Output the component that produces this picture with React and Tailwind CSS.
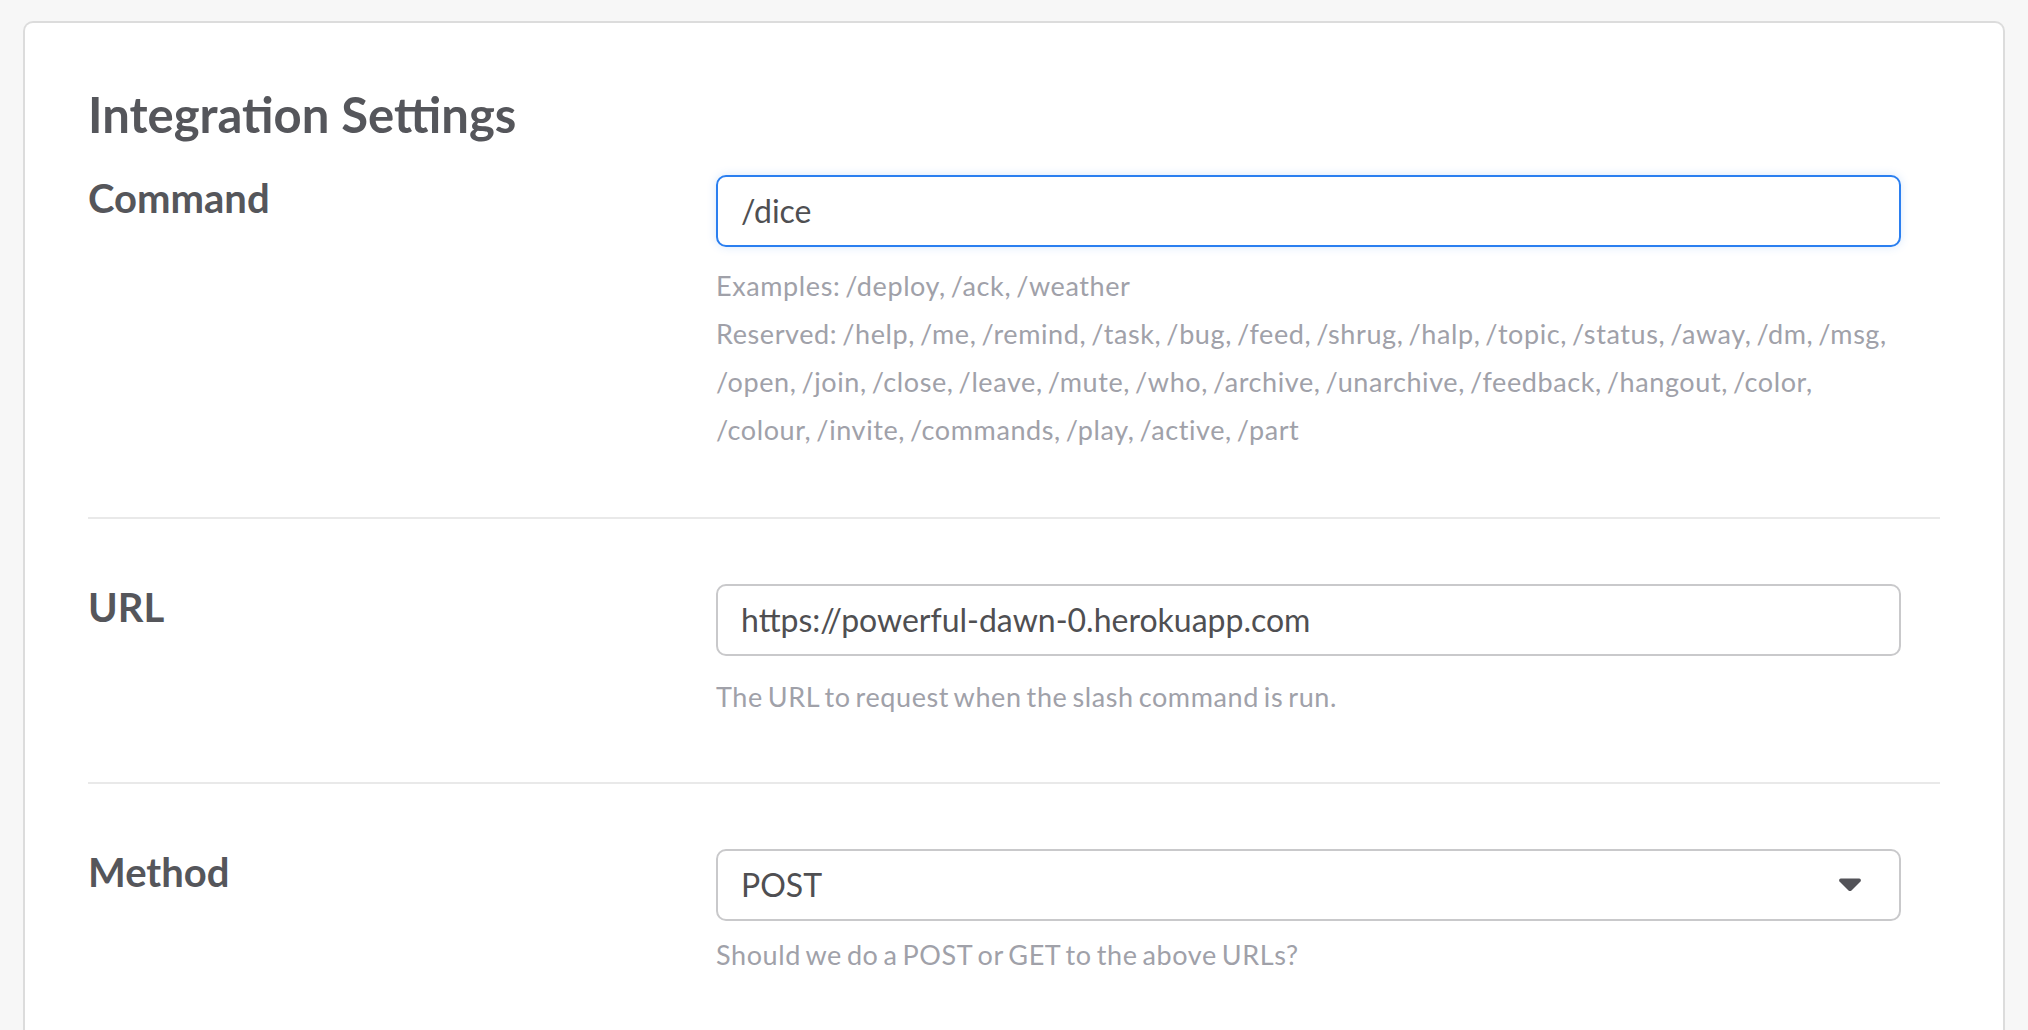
const labelClass = 'text-[40px] font-bold leading-[1.2] text-[#55565b]';
const helpClass = 'text-[27px] leading-[48px] tracking-[0.6px] [word-spacing:-2.5px] text-[#a0a1a9]';
const boxClass =
  'h-[72px] w-full rounded-[10px] border-2 bg-white px-[23px] text-[32px] text-[#4f4f52] outline-none';

const Row = ({ label, children, className = '' }) => (
  <div className={`grid grid-cols-[628px_1185px] ${className}`}>
    <div className={`-mt-[1px] ${labelClass}`}>{label}</div>
    <div>{children}</div>
  </div>
);

const App = () => {
  return (
    <div
      className="min-h-screen bg-[#f7f7f7] px-[23px] pt-[21px]"
      style={{ fontFamily: 'Lato, "Open Sans", sans-serif' }}
    >
      <div className="rounded-t-[10px] border-2 border-b-0 border-[#dcdcdc] bg-white px-[63px] pt-[62px] pb-[80px]">
        <h1 className="text-[49px] font-bold leading-[1.2] text-[#55565b]">Integration Settings</h1>

        <Row label="Command" className="pt-[31px] pb-[63px]">
          <input
            defaultValue="/dice"
            className={`${boxClass} border-[#2b7ff0] shadow-[0_0_10px_rgba(43,127,240,0.18)]`}
          />
          <div className={`mt-[15px] ${helpClass}`}>
            <p>Examples: /deploy, /ack, /weather</p>
            <p>
              Reserved: /help, /me, /remind, /task, /bug, /feed, /shrug, /halp, /topic, /status, /away, /dm, /msg,
              /open, /join, /close, /leave, /mute, /who, /archive, /unarchive, /feedback, /hangout, /color,
              /colour, /invite, /commands, /play, /active, /part
            </p>
          </div>
        </Row>

        <div className="h-[2px] bg-[#e9e9e9]" />

        <Row label="URL" className="pt-[65px] pb-[61px]">
          <input
            defaultValue="https://powerful-dawn-0.herokuapp.com"
            className={`${boxClass} border-[#c9c9cb]`}
          />
          <p className={`mt-[17px] ${helpClass}`}>The URL to request when the slash command is run.</p>
        </Row>

        <div className="h-[2px] bg-[#e9e9e9]" />

        <Row label="Method" className="pt-[65px] pb-[60px]">
          <div className={`${boxClass} flex items-center justify-between border-[#c9c9cb] pr-[37px]`}>
            <span>POST</span>
            <svg width="24" height="15" viewBox="0 0 24 15" aria-hidden="true">
              <path
                d="M3 1.5h18c1.6 0 2.5 1.8 1.5 3l-9 9c-.8.8-2.2.8-3 0l-9-9C.5 3.3 1.4 1.5 3 1.5z"
                fill="#535358"
              />
            </svg>
          </div>
          <p className={`mt-[10px] ${helpClass}`}>Should we do a POST or GET to the above URLs?</p>
        </Row>
      </div>
    </div>
  );
};

export default App;
